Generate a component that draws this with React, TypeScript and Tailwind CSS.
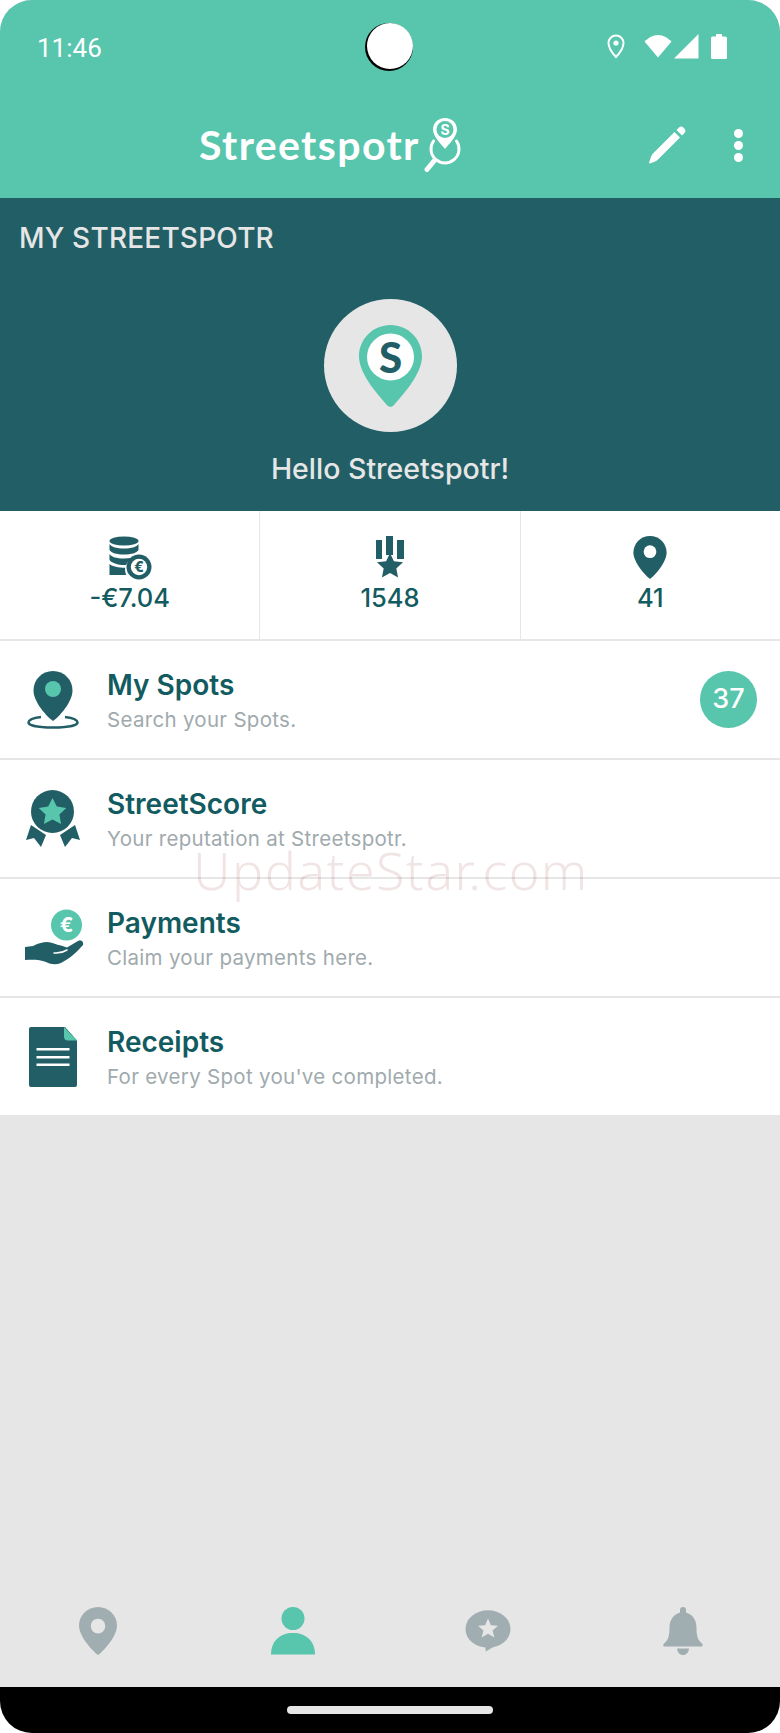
const teal = "#58C5AD";
const dark = "#215E65";
const grey = "#A0AEB1";
const light = "#E6E6E6";

const PIN = "M17 0C7.6 0 0 7.6 0 17c0 10.5 13.2 24.6 17 27 3.8-2.4 17-16.5 17-27C34 7.6 26.4 0 17 0z";

const StatusIcons = () => (
  <div className="flex items-center">
    <svg width="18" height="25" viewBox="0 0 18 25" className="mr-[19px]">
      <path d="M9 1.500C4.800 1.500 1.500 4.800 1.500 9c0 5.200 5.600 12 7.500 14 1.900-2 7.500-8.800 7.500-14 0-4.200-3.300-7.500-7.500-7.500z" fill="none" stroke="#fff" strokeWidth="2" />
      <circle cx="9" cy="9" r="2.600" fill="#fff" />
    </svg>
    <svg width="28" height="24" viewBox="0 0 28 24" className="mr-[2px]">
      <path d="M14 23.500L.5 7.500C4 4.300 8.500 1 14 1s10 3.300 13.500 6.500z" fill="#fff" />
    </svg>
    <svg width="25" height="25" viewBox="0 0 25 25" className="mr-[12px]">
      <path d="M24.500 0v24.500H0z" fill="#fff" />
    </svg>
    <svg width="16" height="25" viewBox="0 0 16 25">
      <path d="M5 0h6v2.500h3.500a1.500 1.500 0 0 1 1.500 1.500v19.500a1.500 1.500 0 0 1-1.500 1.500h-13A1.500 1.500 0 0 1 0 23.500V4a1.500 1.500 0 0 1 1.500-1.500H5z" fill="#fff" />
    </svg>
  </div>
);

const LogoMark = () => (
  <svg width="38" height="56" viewBox="0 0 38 56">
    <path d="M9.500 24a14 14 0 1 0 23 0" fill="none" stroke="#fff" strokeWidth="3" strokeLinecap="round" />
    <path d="M10 44L3 52.500" stroke="#fff" strokeWidth="5" strokeLinecap="round" />
    <path d="M21 1C14 1 9 6 9 12.500 9 19.500 17 27 21 32c4-5 12-12.500 12-19.500C33 6 28 1 21 1z" fill="#fff" />
    <circle cx="21" cy="12.500" r="8.500" fill={teal} />
    <text x="21" y="17.500" textAnchor="middle" fontSize="14" fontWeight="700" fontFamily="Inter, sans-serif" fill="#fff">S</text>
  </svg>
);

const AvatarPin = () => (
  <svg width="63" height="82" viewBox="0 0 63 82">
    <path d="M31.500 0C14 0 0 14 0 31.500 0 50 22 73 28.500 80.500c1.600 1.800 4.400 1.800 6 0C41 73 63 50 63 31.500 63 14 49 0 31.500 0z" fill={teal} />
    <circle cx="31.500" cy="32" r="23.500" fill="#fff" />
    <text x="31.500" y="47.500" textAnchor="middle" fontSize="42" fontWeight="900" fontFamily="Lato, sans-serif" fill={dark}>S</text>
  </svg>
);

const CoinsIcon = () => (
  <svg width="44" height="44" viewBox="0 0 44 44" className="ml-[2px]">
    <ellipse cx="15" cy="5" rx="14.500" ry="4.500" fill={dark} />
    <path d="M.5 8c2 3 7 4.500 14.500 4.500S27.500 11 29.500 8v6c-2 3-7 4.500-14.500 4.500S2.500 17 .5 14z" fill={dark} />
    <path d="M.5 18c2 3 7 4.500 14.500 4.500 5 0 9.500-.7 12.500-2.200C22 22 18.500 25.500 17 29 9 29.200 2.500 27 .5 24z" fill={dark} />
    <path d="M.5 28c3 2.600 9 3.800 15.500 3.800 0 2.600.3 5.200 1.200 7.200H.5z" fill={dark} />
    <circle cx="30" cy="31" r="12.500" fill={dark} />
    <circle cx="30" cy="31" r="8.200" fill="#fff" />
    <text x="30" y="36" textAnchor="middle" fontSize="14" fontWeight="800" fontFamily="Inter, sans-serif" fill={dark}>€</text>
  </svg>
);

const MedalIcon = () => (
  <svg width="28" height="43" viewBox="0 0 28 43">
    <path d="M0 4h6v19H0zM10 0h7v19h-7zM21 4h7v19l-7-.1z" fill={dark} />
    <path d="M14 17l3.900 8.200 9.100 1.100-6.700 6.200 1.800 9-8.100-4.500-8.100 4.500 1.800-9L1 26.300l9.100-1.100z" fill={dark} />
  </svg>
);

const PinIcon = () => (
  <svg width="34" height="43" viewBox="0 0 34 44">
    <path d={PIN} fill={dark} />
    <circle cx="17" cy="16" r="6.500" fill="#fff" />
  </svg>
);

const SpotsIcon = () => (
  <svg width="52" height="58" viewBox="0 0 52 58">
    <path d="M26 0C15 0 6.500 8.500 6.500 19.500 6.500 31 20 46 26 50c6-4 19.500-19 19.500-30.500C45.500 8.500 37 0 26 0z" fill={dark} />
    <circle cx="26" cy="18" r="8" fill={teal} />
    <path d="M14 46C6 47 1.500 49 1.500 51.500 1.500 54.500 12 56.500 26 56.500s24.500-2 24.500-5c0-2.500-4.500-4.500-12.500-5.500" fill="none" stroke={dark} strokeWidth="2.500" />
  </svg>
);

const ScoreIcon = () => (
  <svg width="54" height="58" viewBox="0 0 54 58">
    <circle cx="26.500" cy="21.500" r="21.500" fill={dark} />
    <path d="M26.500 8l4.300 8.600 9.500 1.300-6.900 6.700 1.700 9.400-8.600-4.500-8.600 4.500 1.700-9.400-6.900-6.700 9.500-1.300z" fill={teal} />
    <path d="M5 35l15 10-5 12-7-9-8 2z" fill={dark} strokeLinejoin="round" />
    <path d="M49 35L34 45l5 12 7-9 8 2z" fill={dark} />
  </svg>
);

const PaymentsIcon = () => (
  <svg width="60" height="57" viewBox="0 0 60 57" className="ml-[3px]">
    <circle cx="41.500" cy="16" r="15.500" fill={teal} />
    <text x="41.500" y="23" textAnchor="middle" fontSize="20" fontWeight="700" fontFamily="Inter, sans-serif" fill="#fff">€</text>
    <path d="M0 38l8-1c6-3 10-4 14-4 5 0 9 3 14 3.500l6 2 11-6.500c3-1.500 6 .5 5 4-6 7-14 14-22 18-5 2-10 1.500-15-1-6-2.500-13-2.500-21-2z" fill={dark} />
    <path d="M29 44c5 .5 9-.5 13-3" fill="none" stroke="#fff" strokeWidth="1.500" strokeLinecap="round" />
  </svg>
);

const ReceiptIcon = () => (
  <svg width="48" height="60" viewBox="0 0 48 60">
    <path d="M2 0h34l12 13.500V58a2 2 0 0 1-2 2H2a2 2 0 0 1-2-2V2a2 2 0 0 1 2-2z" fill={dark} />
    <path d="M35 0l13 13.500H39a4 4 0 0 1-4-4z" fill={teal} />
    <path d="M7.500 21h33v2.500h-33zM7.500 29h33v2.500h-33zM7.500 36.500h33V39h-33z" fill="#fff" />
  </svg>
);

const NavPin = () => (
  <svg width="38" height="48" viewBox="0 0 34 44" preserveAspectRatio="none">
    <path d={PIN} fill={grey} />
    <ellipse cx="17" cy="17.500" rx="6.500" ry="6.800" fill={light} />
  </svg>
);

const NavPerson = () => (
  <svg width="46" height="48" viewBox="0 0 46 48">
    <ellipse cx="23" cy="11.500" rx="11.500" ry="11.500" fill={teal} />
    <path d="M1 47.500C1 34 10 26 23 26s22 8 22 21.500z" fill={teal} />
  </svg>
);

const NavBubble = () => (
  <svg width="46" height="42" viewBox="0 0 46 42">
    <ellipse cx="23" cy="19" rx="22.500" ry="18.800" fill={grey} />
    <path d="M20 34l.8 7.500L35 33z" fill={grey} />
    <path d="M23 8.500l2.900 6.700 7.100.6-5.400 4.600 1.700 7.100-6.300-3.800-6.300 3.800 1.700-7.100-5.400-4.600 7.100-.6z" fill={light} />
  </svg>
);

const NavBell = () => (
  <svg width="42" height="48" viewBox="0 0 42 48">
    <path d="M21 0a3 3 0 0 1 3 3v2.500c7 2 10.500 8 10.500 15 0 8 1 12 5 15.500 2 2 1.500 3.500-.5 3.500H3c-2 0-2.500-1.500-.5-3.500 4-3.500 5-7.500 5-15.500 0-7 3.500-13 10.500-15V3a3 3 0 0 1 3-3z" fill={grey} />
    <path d="M15 41.500h12c-.5 4-2.500 6.500-6 6.500s-5.500-2.500-6-6.500z" fill={grey} />
  </svg>
);

const Stat = ({ icon, value, last }: { icon: React.ReactNode; value: string; last?: boolean }) => (
  <div className={`flex-1 flex flex-col items-center pt-[25px] ${last ? "" : "border-r border-[#E6E6E6]"}`}>
    <div className="h-[43px] flex items-center">{icon}</div>
    <span className="-mt-[1px] text-[25.500px] leading-[40px] font-medium text-[#125B60]">{value}</span>
  </div>
);

const Row = ({ icon, title, sub, badge, last }: { icon: React.ReactNode; title: string; sub: string; badge?: string; last?: boolean }) => (
  <div className={`flex items-center bg-white ${last ? "h-[117px]" : "h-[119px] border-b-2 border-[#E6E6E6]"}`}>
    <div className="w-[107px] flex justify-center pr-[1px]">{icon}</div>
    <div className="flex-1 flex flex-col pt-[2px]">
      <span className="text-[28px] leading-[38px] font-semibold text-[#125B60]">{title}</span>
      <span className="text-[20.500px] leading-[31px] tracking-[0.3px] text-[#A0AAAD]">{sub}</span>
    </div>
    {badge && (
      <div className="mr-[23px] w-[57px] h-[57px] rounded-full flex items-center justify-center bg-[#58C5AD] text-white text-[27px] font-medium">
        {badge}
      </div>
    )}
  </div>
);

export default function App() {
  return (
    <div className="w-[780px] h-[1733px] bg-white font-['Inter',sans-serif]">
      <div className="relative w-full h-full flex flex-col overflow-hidden rounded-[32px] bg-[#E6E6E6]">
        <div className="h-[198px] bg-[#58C5AD] flex flex-col shrink-0">
          <div className="relative h-[92px] flex items-center justify-between pl-[37px] pr-[53px]">
            <span className="pt-[4px] font-['Roboto',sans-serif] text-[26px] text-white">11:46</span>
            <div className="absolute left-[367px] top-[23px] w-[46px] h-[46px] rounded-full bg-white shadow-[-1px_1px_0_1px_#000]" />
            <StatusIcons />
          </div>
          <div className="relative flex-1 flex items-center">
            <div className="absolute left-[199px] top-[30px] font-['Lato',sans-serif] font-bold text-[41px] leading-[46px] tracking-[1.400px] text-white">
              Streetspotr
            </div>
            <div className="absolute left-[424px] top-[25px]">
              <LogoMark />
            </div>
            <div className="ml-auto flex items-center pr-[37px]">
              <svg width="38" height="38" viewBox="0 0 38 38" className="mr-[48px]">
                <path d="M31 1.500c1.300-1.300 3-1.300 4.300 0l1.200 1.200c1.300 1.300 1.300 3 0 4.300l-2.500 2.500-5.500-5.500zM26.500 6l5.500 5.500L10 33.500C8 35.500 4 37 1 37.500c.5-3 2-7 3.500-9.500z" fill="#fff" />
              </svg>
              <div className="flex flex-col gap-[3px]">
                <div className="w-[9px] h-[9px] rounded-full bg-white" />
                <div className="w-[9px] h-[9px] rounded-full bg-white" />
                <div className="w-[9px] h-[9px] rounded-full bg-white" />
              </div>
            </div>
          </div>
        </div>

        <div className="h-[313px] bg-[#215E65] flex flex-col items-center shrink-0">
          <div className="w-full pl-[19px] pt-[22px] text-[28px] leading-[36px] font-medium tracking-[0.2px] text-[#E6E6E6]">MY STREETSPOTR</div>
          <div className="mt-[43px] w-[133px] h-[133px] rounded-full bg-[#E6E6E6] flex items-center justify-center">
            <AvatarPin />
          </div>
          <div className="mt-[17px] text-[28.500px] leading-[40px] font-medium text-[#E6E6E6]">Hello Streetspotr!</div>
        </div>

        <div className="h-[130px] bg-white flex border-b-2 border-[#E6E6E6] shrink-0">
          <Stat icon={<CoinsIcon />} value="-€7.04" />
          <Stat icon={<MedalIcon />} value="1548" />
          <Stat icon={<PinIcon />} value="41" last />
        </div>

        <div className="shrink-0">
          <Row icon={<SpotsIcon />} title="My Spots" sub="Search your Spots." badge="37" />
          <Row icon={<ScoreIcon />} title="StreetScore" sub="Your reputation at Streetspotr." />
          <Row icon={<PaymentsIcon />} title="Payments" sub="Claim your payments here." />
          <Row icon={<ReceiptIcon />} title="Receipts" sub="For every Spot you've completed." last />
        </div>

        <div className="flex-1" />

        <div className="h-[100px] flex items-start pt-[20px] shrink-0">
          <div className="flex-1 flex justify-center"><NavPin /></div>
          <div className="flex-1 flex justify-center"><NavPerson /></div>
          <div className="flex-1 flex justify-center pt-[3px]"><NavBubble /></div>
          <div className="flex-1 flex justify-center"><NavBell /></div>
        </div>

        <div className="h-[46px] bg-black flex justify-center pt-[19px] shrink-0">
          <div className="w-[206px] h-[8px] rounded-full bg-[#E6E6E6]" />
        </div>

        <div className="absolute left-[193px] top-[851px] font-['Noto_Sans',sans-serif] font-light text-[52px] leading-[38px] tracking-[1.500px] text-[#9A4A4A]/15 pointer-events-none">
          UpdateStar.com
        </div>
      </div>
    </div>
  );
}
